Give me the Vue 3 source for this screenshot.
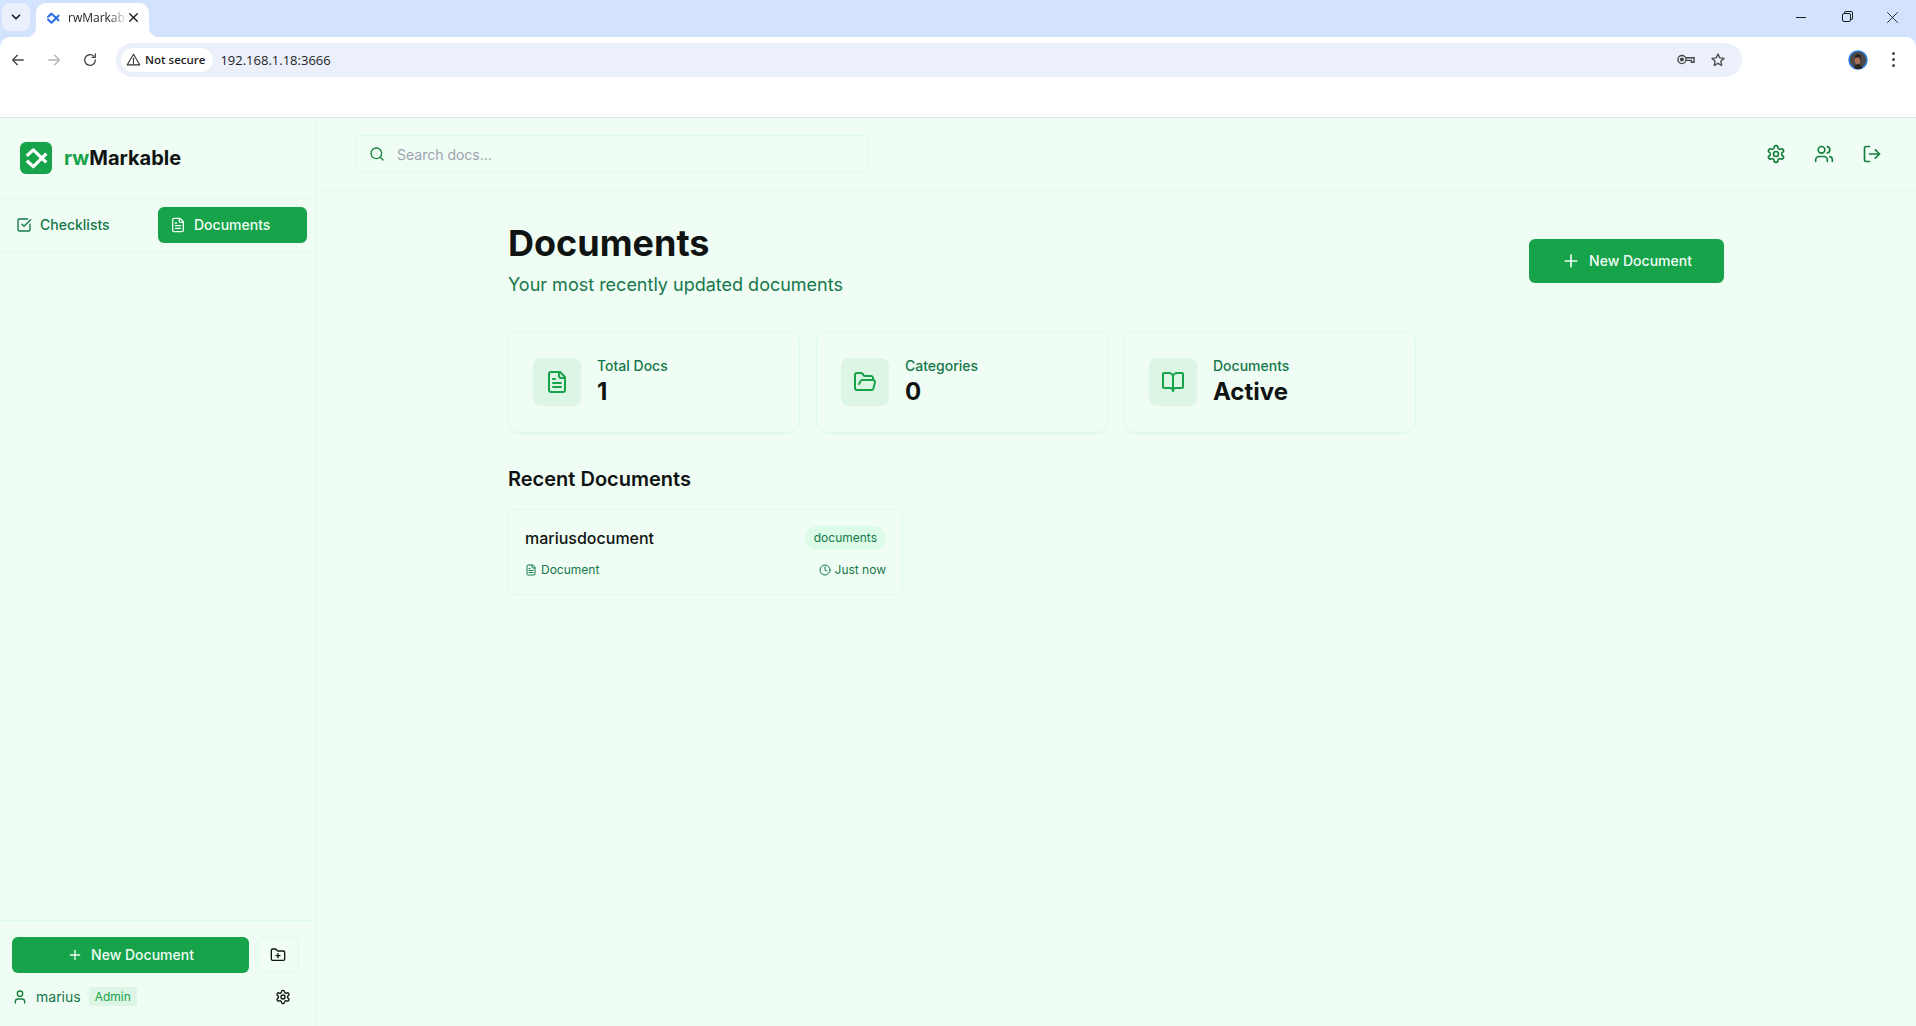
<script setup>
import { h } from 'vue';

const icons = {
  fileText: '<path d="M15 2H6a2 2 0 0 0-2 2v16a2 2 0 0 0 2 2h12a2 2 0 0 0 2-2V7Z"/><path d="M14 2v4a2 2 0 0 0 2 2h4"/><path d="M10 9H8"/><path d="M16 13H8"/><path d="M16 17H8"/>',
  check: '<path d="M21 10.656V19a2 2 0 0 1-2 2H5a2 2 0 0 1-2-2V5a2 2 0 0 1 2-2h12.344"/><path d="m9 11 3 3L22 4"/>',
  search: '<circle cx="11" cy="11" r="8"/><path d="m21 21-4.3-4.3"/>',
  settings: '<path d="M12.22 2h-.44a2 2 0 0 0-2 2v.18a2 2 0 0 1-1 1.73l-.43.25a2 2 0 0 1-2 0l-.15-.08a2 2 0 0 0-2.73.73l-.22.38a2 2 0 0 0 .73 2.73l.15.1a2 2 0 0 1 1 1.72v.51a2 2 0 0 1-1 1.74l-.15.09a2 2 0 0 0-.73 2.73l.22.38a2 2 0 0 0 2.73.73l.15-.08a2 2 0 0 1 2 0l.43.25a2 2 0 0 1 1 1.73V20a2 2 0 0 0 2 2h.44a2 2 0 0 0 2-2v-.18a2 2 0 0 1 1-1.73l.43-.25a2 2 0 0 1 2 0l.15.08a2 2 0 0 0 2.73-.73l.22-.39a2 2 0 0 0-.73-2.73l-.15-.08a2 2 0 0 1-1-1.74v-.5a2 2 0 0 1 1-1.74l.15-.09a2 2 0 0 0 .73-2.73l-.22-.38a2 2 0 0 0-2.73-.73l-.15.08a2 2 0 0 1-2 0l-.43-.25a2 2 0 0 1-1-1.73V4a2 2 0 0 0-2-2z"/><circle cx="12" cy="12" r="3"/>',
  users: '<path d="M16 21v-2a4 4 0 0 0-4-4H6a4 4 0 0 0-4 4v2"/><circle cx="9" cy="7" r="4"/><path d="M22 21v-2a4 4 0 0 0-3-3.87"/><path d="M16 3.13a4 4 0 0 1 0 7.75"/>',
  logOut: '<path d="M9 21H5a2 2 0 0 1-2-2V5a2 2 0 0 1 2-2h4"/><path d="m16 17 5-5-5-5"/><path d="M21 12H9"/>',
  folderOpen: '<path d="m6 14 1.5-2.9A2 2 0 0 1 9.24 10H20a2 2 0 0 1 1.94 2.5l-1.54 6a2 2 0 0 1-1.95 1.5H4a2 2 0 0 1-2-2V5a2 2 0 0 1 2-2h3.9a2 2 0 0 1 1.69.9l.81 1.2a2 2 0 0 0 1.67.9H18a2 2 0 0 1 2 2v2"/>',
  bookOpen: '<path d="M12 7v14"/><path d="M3 18a1 1 0 0 1-1-1V4a1 1 0 0 1 1-1h5a4 4 0 0 1 4 4 4 4 0 0 1 4-4h5a1 1 0 0 1 1 1v13a1 1 0 0 1-1 1h-6a3 3 0 0 0-3 3 3 3 0 0 0-3-3z"/>',
  plus: '<path d="M5 12h14"/><path d="M12 5v14"/>',
  clock: '<circle cx="12" cy="12" r="10"/><path d="M12 6v6l4 2"/>',
  user: '<path d="M19 21v-2a4 4 0 0 0-4-4H9a4 4 0 0 0-4 4v2"/><circle cx="12" cy="7" r="4"/>',
  folderPlus: '<path d="M12 10v6"/><path d="M9 13h6"/><path d="M20 20a2 2 0 0 0 2-2V8a2 2 0 0 0-2-2h-7.9a2 2 0 0 1-1.69-.9L9.6 3.9A2 2 0 0 0 7.93 3H4a2 2 0 0 0-2 2v13a2 2 0 0 0 2 2Z"/>',
  arrowLeft: '<path d="M20 12H5"/><path d="m11 5-7 7 7 7"/>',
  arrowRight: '<path d="M4 12h15"/><path d="m13 5 7 7-7 7"/>',
  reload: '<path d="M20 12a8 8 0 1 1-2.5-5.8"/><path d="M20 3v5h-5"/>',
  chevron: '<path d="m6 9 6 6 6-6"/>',
  close: '<path d="M5 5l14 14"/><path d="M19 5 5 19"/>',
  warning: '<path d="M12 3.5 2 20.5h20z"/><path d="M12 10v5"/><path d="M12 17v1.5"/>',
  star: '<path d="m12 3 2.7 5.9 6.3.7-4.7 4.3 1.3 6.3L12 17l-5.6 3.2 1.3-6.3L3 9.6l6.300-.7z"/>',
  mark: '<path d="M3.5 10 9.5 4.5l12 11.500"/><path d="M3.5 14.5 9.5 20l12-12"/>',
};

// small wrapper so the lucide-style icons stay one line in the template
const Icon = (props) =>
  h('svg', {
    viewBox: '0 0 24 24',
    fill: 'none',
    stroke: 'currentColor',
    'stroke-width': 2,
    'stroke-linecap': 'round',
    'stroke-linejoin': 'round',
    innerHTML: icons[props.name],
  });
Icon.props = ['name'];

const stats = [
  { label: 'Total Docs', value: '1', icon: 'fileText' },
  { label: 'Categories', value: '0', icon: 'folderOpen' },
  { label: 'Documents', value: 'Active', icon: 'bookOpen' },
];
</script>

<template>
  <div class="window">
    <!-- browser frame -->
    <div class="frame">
      <div class="tabstrip">
        <div class="tab-search"><Icon name="chevron" class="i-tabsearch" /></div>
        <div class="tab">
          <Icon name="mark" class="i-favicon" />
          <span class="tab-title">rwMarkable</span>
          <Icon name="close" class="i-tabclose" />
        </div>
        <div class="window-controls">
          <span class="win-min"></span>
          <span class="win-max"></span>
          <Icon name="close" class="i-winclose" />
        </div>
      </div>
      <div class="toolbar">
        <div class="nav">
          <Icon name="arrowLeft" class="i-nav" />
          <Icon name="arrowRight" class="i-nav dim" />
          <Icon name="reload" class="i-nav" />
        </div>
        <div class="omnibox">
          <div class="chip"><Icon name="warning" class="i-warn" />Not secure</div>
          <span class="url">192.168.1.18:3666</span>
          <div class="omni-right">
            <svg class="i-key" viewBox="0 0 20 12" fill="none" stroke="currentColor" stroke-width="1.5">
              <circle cx="5.5" cy="6" r="4.5" />
              <circle cx="5.5" cy="6" r="1.5" fill="currentColor" />
              <path d="M10 4h9v5h-3V7h-6" />
            </svg>
            <Icon name="star" class="i-star" />
          </div>
        </div>
        <svg class="avatar" viewBox="0 0 20 20">
          <circle cx="10" cy="10" r="9" fill="#4b4846" stroke="#2f80e4" stroke-width="1.5" />
          <path d="M6 18.2c.5-3 2-4 4-4s3.800 1 4.300 4a9 9 0 0 1-8.300 0z" fill="#2a2623" />
          <ellipse cx="9.500" cy="10" rx="2.800" ry="4.200" fill="#a96f55" />
          <path d="M6.800 8c0-2.500 1.500-3.500 3.200-3.500s3.200 1.200 3 3.800l-1.200 2-.3-3z" fill="#26211e" />
        </svg>
        <div class="dots"><span></span><span></span><span></span></div>
      </div>
      <div class="bookmarks"></div>
    </div>

    <!-- app -->
    <div class="app">
      <aside class="sidebar">
        <div class="brand">
          <div class="logo"><Icon name="mark" class="i-logo" /></div>
          <span class="brand-name"><span class="brand-rw">rw</span>Markable</span>
        </div>
        <div class="modes">
          <button class="mode"><Icon name="check" class="i16" />Checklists</button>
          <button class="mode active"><Icon name="fileText" class="i16" />Documents</button>
        </div>
        <div class="side-list"></div>
        <div class="side-foot">
          <div class="foot-actions">
            <button class="btn-primary side-new"><Icon name="plus" class="i16" />New Document</button>
            <button class="btn-folder"><Icon name="folderPlus" class="i16" /></button>
          </div>
          <div class="user-row">
            <Icon name="user" class="i16 green" />
            <span class="user-name">marius</span>
            <span class="role">Admin</span>
            <Icon name="settings" class="i16 user-settings" />
          </div>
        </div>
      </aside>

      <div class="content">
        <header class="topbar">
          <div class="search">
            <Icon name="search" class="i16 green" />
            <span class="search-text">Search docs...</span>
          </div>
          <div class="top-actions">
            <Icon name="settings" class="i20" />
            <Icon name="users" class="i20" />
            <Icon name="logOut" class="i20" />
          </div>
        </header>

        <main class="main">
          <div class="page-head">
            <div>
              <h1>Documents</h1>
              <p class="subtitle">Your most recently updated documents</p>
            </div>
            <button class="btn-primary head-new"><Icon name="plus" class="i20" />New Document</button>
          </div>

          <div class="stats">
            <div v-for="s in stats" :key="s.label" class="stat">
              <div class="stat-icon"><Icon :name="s.icon" class="i24" /></div>
              <div>
                <div class="stat-label">{{ s.label }}</div>
                <div class="stat-value">{{ s.value }}</div>
              </div>
            </div>
          </div>

          <h2>Recent Documents</h2>
          <div class="doc-card">
            <div class="doc-top">
              <span class="doc-name">mariusdocument</span>
              <span class="doc-tag">documents</span>
            </div>
            <div class="doc-meta">
              <span class="meta-item"><Icon name="fileText" class="i12" />Document</span>
              <span class="meta-item"><Icon name="clock" class="i12" />Just now</span>
            </div>
          </div>
        </main>
      </div>
    </div>
  </div>
</template>

<style scoped>
.window {
  height: 1026px;
  display: flex;
  flex-direction: column;
  overflow: hidden;
  font-family: Inter, "Liberation Sans", sans-serif;
  background: #f0fdf4;
}

/* browser frame */
.frame {
  background: #d3e3fd;
  flex-shrink: 0;
}
.tabstrip {
  height: 37px;
  display: flex;
  align-items: flex-start;
}
.tab-search {
  width: 28px;
  height: 28px;
  margin: 3px 0 0 2px;
  border-radius: 8px;
  background: #ebf1fc;
  display: flex;
  align-items: center;
  justify-content: center;
}
.i-tabsearch { width: 14px; height: 14px; color: #1f1f1f; stroke-width: 3; }
.tab {
  width: 113px;
  height: 34px;
  margin: 3px 0 0 6px;
  padding: 0 9px 5px 10px;
  box-sizing: border-box;
  background: #fff;
  border-radius: 10px 10px 0 0;
  display: flex;
  align-items: center;
  font: 12px "Open Sans", "Liberation Sans", sans-serif;
  color: #1f1f1f;
  position: relative;
}
/* concave corners at the foot of the active tab */
.tab::before,
.tab::after {
  content: '';
  position: absolute;
  bottom: 0;
  width: 10px;
  height: 10px;
}
.tab::before {
  left: -10px;
  background: radial-gradient(circle at 0 0, transparent 10px, #fff 10.5px);
}
.tab::after {
  right: -10px;
  background: radial-gradient(circle at 100% 0, transparent 10px, #fff 10.5px);
}
.tab-title {
  flex: 1;
  margin-left: 8px;
  width: 50px;
  overflow: hidden;
  white-space: nowrap;
  -webkit-mask-image: linear-gradient(to right, #000 70%, transparent);
  mask-image: linear-gradient(to right, #000 70%, transparent);
}
.i-favicon { width: 14px; height: 14px; color: #2b6ee8; flex-shrink: 0; stroke-width: 3.5; }
.i-tabclose { width: 13px; height: 13px; color: #1f1f1f; flex-shrink: 0; stroke-width: 2.6; }
.window-controls {
  margin-left: auto;
  height: 34px;
  display: flex;
  align-items: center;
  gap: 36.5px;
  padding-right: 15px;
}
.win-min { width: 10px; height: 1px; background: #1f1f1f; }
.win-max {
  width: 7px;
  height: 7px;
  margin-right: -3.5px;
  border: 1px solid #1f1f1f;
  border-radius: 2px;
  box-shadow: 2px -2px 0 -1px #d3e3fd, 2px -2px 0 0 #1f1f1f;
}
.i-winclose { width: 17px; height: 17px; color: #1f1f1f; stroke-width: 1.3; }

.toolbar {
  height: 43px;
  background: #fff;
  border-radius: 10px 10px 0 0;
  display: flex;
  align-items: center;
  padding-top: 2px;
  box-sizing: border-box;
}
.nav {
  width: 116px;
  padding-left: 10px;
  box-sizing: border-box;
  display: flex;
  gap: 20px;
  flex-shrink: 0;
}
.i-nav { width: 16px; height: 16px; color: #474747; flex-shrink: 0; }
.i-nav.dim { color: #b2b2b2; }
.omnibox {
  width: 1626px;
  height: 34px;
  box-sizing: border-box;
  border-radius: 17px;
  background: #ebf0fa;
  padding-left: 5px;
  display: flex;
  align-items: center;
  font: 13px "Open Sans", "Liberation Sans", sans-serif;
  color: #1f1f1f;
}
.chip {
  height: 24px;
  padding: 0 8px 0 5px;
  background: #fff;
  border-radius: 12px;
  display: flex;
  align-items: center;
  gap: 4px;
  font-size: 11.5px;
  font-weight: 600;
}
.i-warn { width: 15px; height: 15px; stroke-width: 1.8; color: #333; }
.url { margin-left: 7px; }
.omni-right {
  margin-left: auto;
  padding-right: 16px;
  display: flex;
  align-items: center;
  gap: 15px;
  color: #474747;
}
.i-key { width: 18px; height: 11px; }
.i-star { width: 16px; height: 16px; }
.avatar {
  width: 20px;
  height: 20px;
  margin-left: 106px;
  flex-shrink: 0;
}
.dots {
  margin-left: 24px;
  display: flex;
  flex-direction: column;
  gap: 3px;
}
.dots span { width: 3px; height: 3px; background: #474747; border-radius: 50%; }

.bookmarks {
  height: 37px;
  background: #fff;
  border-bottom: 1px solid #e0e0e0;
}

/* app */
.app {
  flex: 1;
  display: flex;
  min-height: 0;
}
.i12 { width: 12px; height: 12px; flex-shrink: 0; }
.i16 { width: 16px; height: 16px; flex-shrink: 0; }
.i20 { width: 20px; height: 20px; flex-shrink: 0; }
.i24 { width: 24px; height: 24px; flex-shrink: 0; }
.green { color: #15803d; }

.sidebar {
  width: 316px;
  box-sizing: border-box;
  border-right: 1px solid #dcfce7;
  display: flex;
  flex-direction: column;
  flex-shrink: 0;
}
.brand {
  height: 81px;
  box-sizing: border-box;
  padding-left: 20px;
  border-bottom: 1px solid #dcfce7;
  display: flex;
  align-items: center;
  gap: 12px;
}
.logo {
  width: 32px;
  height: 32px;
  border-radius: 6px;
  background: #16a34a;
  color: #fff;
  display: flex;
  align-items: center;
  justify-content: center;
}
.i-logo { width: 26px; height: 26px; stroke-width: 3; stroke-linecap: butt; }
.brand-name { font-size: 20px; font-weight: 700; color: #0f1412; }
.brand-rw { color: #16a34a; }
.modes {
  height: 53px;
  box-sizing: border-box;
  padding: 8px;
  border-bottom: 1px solid #dcfce7;
  display: grid;
  grid-template-columns: 1fr 149px;
  gap: 8px;
}
.mode {
  border: none;
  background: none;
  border-radius: 6px;
  padding: 0 8px 1px;
  display: flex;
  align-items: center;
  gap: 8px;
  font: 500 14px Inter, sans-serif;
  color: #15774a;
}
.mode.active { background: #16a34a; color: #f0fdf4; padding-left: 12px; }
.side-list { flex: 1; }
.side-foot {
  border-top: 1px solid #dcfce7;
  padding: 16px 16px 0 12px;
  height: 106px;
  box-sizing: border-box;
}
.foot-actions { display: flex; gap: 8px; }
.btn-primary {
  border: none;
  background: #16a34a;
  color: #f0fdf4;
  border-radius: 6px;
  padding: 0 0 1px;
  display: flex;
  align-items: center;
  justify-content: center;
  gap: 8px;
  font: 500 14px Inter, sans-serif;
}
.side-new { flex: 1; height: 36px; }
.btn-folder {
  width: 42px;
  height: 36px;
  border: 1px solid #dcfce7;
  border-radius: 6px;
  background: #f0fdf4;
  color: #0f1412;
  padding: 0;
  display: flex;
  align-items: center;
  justify-content: center;
}
.user-row {
  margin-top: 14px;
  display: flex;
  align-items: center;
  font-size: 14px;
  color: #15774a;
}
.user-name { margin-left: 8px; }
.role {
  margin-left: 8px;
  padding: 2px 6px;
  background: #dcf5e4;
  border-radius: 3px;
  font-size: 12px;
  color: #16a34a;
}
.user-settings { margin-left: auto; margin-right: 8px; color: #0f1412; }

.content {
  flex: 1;
  display: flex;
  flex-direction: column;
  min-width: 0;
}
.topbar {
  height: 73px;
  box-sizing: border-box;
  border-bottom: 1px solid #dcfce7;
  padding: 0 34px 0 40px;
  display: flex;
  align-items: center;
  justify-content: space-between;
}
.search {
  width: 512px;
  height: 38px;
  box-sizing: border-box;
  border: 1px solid #dcfce7;
  border-radius: 6px;
  padding-left: 12px;
  display: flex;
  align-items: center;
  gap: 12px;
}
.search-text { font-size: 14px; color: #9ca3af; }
.top-actions {
  display: flex;
  gap: 28px;
  color: #15803d;
}
.main {
  width: 1216px;
  margin-left: 192px;
  padding-top: 32px;
}
.page-head {
  display: flex;
  justify-content: space-between;
  align-items: center;
  margin-bottom: 32px;
}
h1 {
  margin: 0;
  font-size: 36px;
  line-height: 40px;
  font-weight: 700;
  color: #0f1412;
}
.subtitle {
  margin: 8px 0 0;
  font-size: 18px;
  line-height: 28px;
  color: #15774a;
}
.head-new { width: 195px; height: 44px; font-size: 14px; }
.stats {
  width: 908px;
  display: grid;
  grid-template-columns: repeat(3, 1fr);
  gap: 16px;
  margin-bottom: 32px;
}
.stat {
  height: 102px;
  box-sizing: border-box;
  border: 1px solid #dcfce7;
  border-radius: 12px;
  box-shadow: 0 1px 2px rgba(22, 163, 74, 0.06);
  padding: 0 24px;
  display: flex;
  align-items: center;
  gap: 16px;
}
.stat-icon {
  width: 48px;
  height: 48px;
  border-radius: 8px;
  background: #dcf5e4;
  color: #16a34a;
  display: flex;
  align-items: center;
  justify-content: center;
}
.stat-label { font-size: 14px; font-weight: 500; color: #15774a; line-height: 20px; }
.stat-value { font-size: 24px; font-weight: 700; color: #0f1412; line-height: 32px; }
h2 {
  margin: 0 0 16px;
  font-size: 20px;
  line-height: 28px;
  font-weight: 600;
  color: #0f1412;
}
.doc-card {
  width: 395px;
  height: 86px;
  box-sizing: border-box;
  border: 1px solid #dcfce7;
  border-radius: 8px;
  padding: 16px;
}
.doc-top {
  display: flex;
  align-items: center;
  justify-content: space-between;
}
.doc-name { font-size: 16px; font-weight: 500; color: #0f1412; }
.doc-tag {
  height: 24px;
  padding: 0 9px;
  border-radius: 12px;
  background: #dcfce7;
  font-size: 12px;
  line-height: 24px;
  color: #15774a;
}
.doc-meta {
  margin-top: 12px;
  display: flex;
  justify-content: space-between;
  font-size: 12px;
  color: #15774a;
}
.meta-item { display: flex; align-items: center; gap: 4px; }
</style>

<style>
html, body { background: #f0fdf4; }
</style>
